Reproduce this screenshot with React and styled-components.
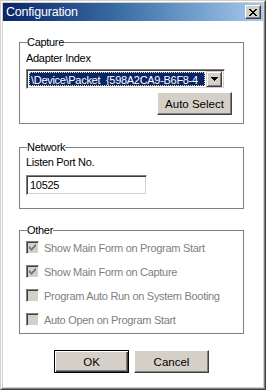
import React from "react";
import styled, { createGlobalStyle } from "styled-components";

const Global = createGlobalStyle`
  html, body { margin: 0; padding: 0; background: #fff; }
  body { font-family: "Liberation Sans", Arial, sans-serif; font-size: 11px; color: #000; }
`;

const Window = styled.div`
  width: 266px;
  height: 390px;
  box-sizing: border-box;
  border: 1px solid;
  border-color: #d4d0c8 #404040 #404040 #d4d0c8;
  display: flex;
  flex-direction: column;
`;

const Frame = styled.div`
  flex: 1;
  display: flex;
  flex-direction: column;
  border: 1px solid;
  border-color: #fff #808080 #808080 #fff;
  padding: 1px;
  background: #d4d0c8;
  min-height: 0;
`;

const TitleBar = styled.div`
  height: 18px;
  flex: none;
  display: flex;
  align-items: center;
  justify-content: space-between;
  padding: 0 2px 0 3px;
  background: linear-gradient(to right, #0a246a 0%, #3a6ea5 45%, #a6caf0 100%);
`;

const Title = styled.span`
  color: #fff;
  font-size: 12.5px;
  letter-spacing: -0.2px;
  line-height: 18px;
`;

const CloseBtn = styled.div`
  width: 16px;
  height: 14px;
  box-sizing: border-box;
  background: #d4d0c8;
  border: 1px solid;
  border-color: #fff #404040 #404040 #fff;
  box-shadow: inset -1px -1px 0 #808080;
  display: flex;
  align-items: center;
  justify-content: center;
`;

const Client = styled.div`
  flex: 1;
  background: #fff;
  display: flex;
  flex-direction: column;
  padding: 15px 19px 0 16px;
  letter-spacing: -0.3px;
`;

const Group = styled.fieldset`
  margin: ${(p) => p.$mt || 0}px 0 0 0;
  padding: ${(p) => p.$pad};
  border: 1px solid #808080;
  min-width: 0;
  display: flex;
  flex-direction: column;
`;

const Legend = styled.legend`
  padding: 0;
  margin-left: 1px;
  font-size: 11px;
  line-height: 13px;
`;

const Label = styled.div`
  line-height: 13px;
  font-size: 11px;
`;

const Combo = styled.div`
  margin-top: 4px;
  width: 199px;
  height: 20px;
  box-sizing: border-box;
  border: 1px solid;
  border-color: #808080 #fff #fff #808080;
  box-shadow: inset 1px 1px 0 #404040, inset -1px -1px 0 #d4d0c8;
  padding: 2px;
  display: flex;
  background: #fff;
`;

const ComboValue = styled.div`
  flex: 1;
  min-width: 0;
  box-sizing: border-box;
  background: #0a246a;
  color: #fff;
  border: 1px dotted #e8dca0;
  padding-left: 1px;
  line-height: 14px;
  white-space: nowrap;
  overflow: hidden;
  margin-right: 1px;
`;

const DropBtn = styled.div`
  width: 16px;
  flex: none;
  box-sizing: border-box;
  margin: -1px 0;
  background: #d4d0c8;
  border: 1px solid;
  border-color: #d4d0c8 #404040 #404040 #d4d0c8;
  box-shadow: inset 1px 1px 0 #fff, inset -1px -1px 0 #808080;
  display: flex;
  align-items: center;
  justify-content: center;
`;

const Button = styled.div`
  width: 75px;
  height: 23px;
  box-sizing: border-box;
  background: #d4d0c8;
  border: 1px solid;
  border-color: ${(p) => (p.$default ? "#000" : "#fff #404040 #404040 #fff")};
  box-shadow: ${(p) =>
    p.$default
      ? "inset 1px 1px 0 #fff, inset -1px -1px 0 #404040, inset -2px -2px 0 #808080"
      : "inset -1px -1px 0 #808080"};
  display: flex;
  align-items: center;
  justify-content: center;
  font-size: 11.5px;
  letter-spacing: 0;
  color: #000;
`;

const RightButton = styled(Button)`
  align-self: flex-end;
  margin-top: 3px;
`;

const TextInput = styled.div`
  margin-top: 6px;
  width: 121px;
  height: 20px;
  box-sizing: border-box;
  border: 1px solid;
  border-color: #808080 #fff #fff #808080;
  box-shadow: inset 1px 1px 0 #404040, inset -1px -1px 0 #d4d0c8;
  padding: 0 3px;
  line-height: 18px;
  background: #fff;
`;

const CheckList = styled.div`
  display: flex;
  flex-direction: column;
  gap: 11px;
`;

const CheckRow = styled.div`
  display: flex;
  align-items: center;
  gap: 5px;
  height: 13px;
  color: #808080;
`;

const Box = styled.div`
  width: 13px;
  height: 13px;
  box-sizing: border-box;
  border: 1px solid;
  border-color: #808080 #fff #fff #808080;
  box-shadow: inset 1px 1px 0 #404040, inset -1px -1px 0 #d4d0c8;
  background: #d4d0c8;
  display: flex;
  align-items: center;
  justify-content: center;
`;

const ButtonRow = styled.div`
  margin-top: 16px;
  display: flex;
  gap: 5px;
  padding-left: 35px;
`;

const CloseGlyph = () => (
  <svg width="8" height="7" viewBox="0 0 8 7">
    <path d="M0 0h2v1h-2zM6 0h2v1h-2zM1 1h2v1h-2zM5 1h2v1h-2zM2 2h4v1h-4zM3 3h2v1h-2zM2 4h4v1h-4zM1 5h2v1h-2zM5 5h2v1h-2zM0 6h2v1h-2zM6 6h2v1h-2z" fill="#000" />
  </svg>
);

const DownArrow = () => (
  <svg width="7" height="4" viewBox="0 0 7 4">
    <path d="M0 0h7v1h-7zM1 1h5v1h-5zM2 2h3v1h-3zM3 3h1v1h-1z" fill="#000" />
  </svg>
);

const CheckMark = () => (
  <svg width="7" height="7" viewBox="0 0 7 7">
    <path d="M6 0h1v3h-1zM5 1h1v3h-1zM4 2h1v3h-1zM3 3h1v3h-1zM2 4h1v3h-1zM1 3h1v3h-1zM0 2h1v3h-1z" fill="#808080" />
  </svg>
);

const Check = ({ checked, children }) => (
  <CheckRow>
    <Box>{checked && <CheckMark />}</Box>
    <span>{children}</span>
  </CheckRow>
);

export default function App() {
  return (
    <>
      <Global />
      <Window>
        <Frame>
          <TitleBar>
            <Title>Configuration</Title>
            <CloseBtn>
              <CloseGlyph />
            </CloseBtn>
          </TitleBar>
          <Client>
            <Group $pad="3px 11px 8px 6px">
              <Legend>Capture</Legend>
              <Label>Adapter Index</Label>
              <Combo>
                <ComboValue>\Device\Packet_{"{"}598A2CA9-B6F8-4</ComboValue>
                <DropBtn>
                  <DownArrow />
                </DropBtn>
              </Combo>
              <RightButton>Auto Select</RightButton>
            </Group>
            <Group $mt={17} $pad="2px 11px 13px 6px">
              <Legend>Network</Legend>
              <Label>Listen Port No.</Label>
              <TextInput>10525</TextInput>
            </Group>
            <Group $mt={15} $pad="4px 11px 7px 6px">
              <Legend>Other</Legend>
              <CheckList>
                <Check checked>Show Main Form on Program Start</Check>
                <Check checked>Show Main Form on Capture</Check>
                <Check>Program Auto Run on System Booting</Check>
                <Check>Auto Open on Program Start</Check>
              </CheckList>
            </Group>
            <ButtonRow>
              <Button $default>OK</Button>
              <Button>Cancel</Button>
            </ButtonRow>
          </Client>
        </Frame>
      </Window>
    </>
  );
}
